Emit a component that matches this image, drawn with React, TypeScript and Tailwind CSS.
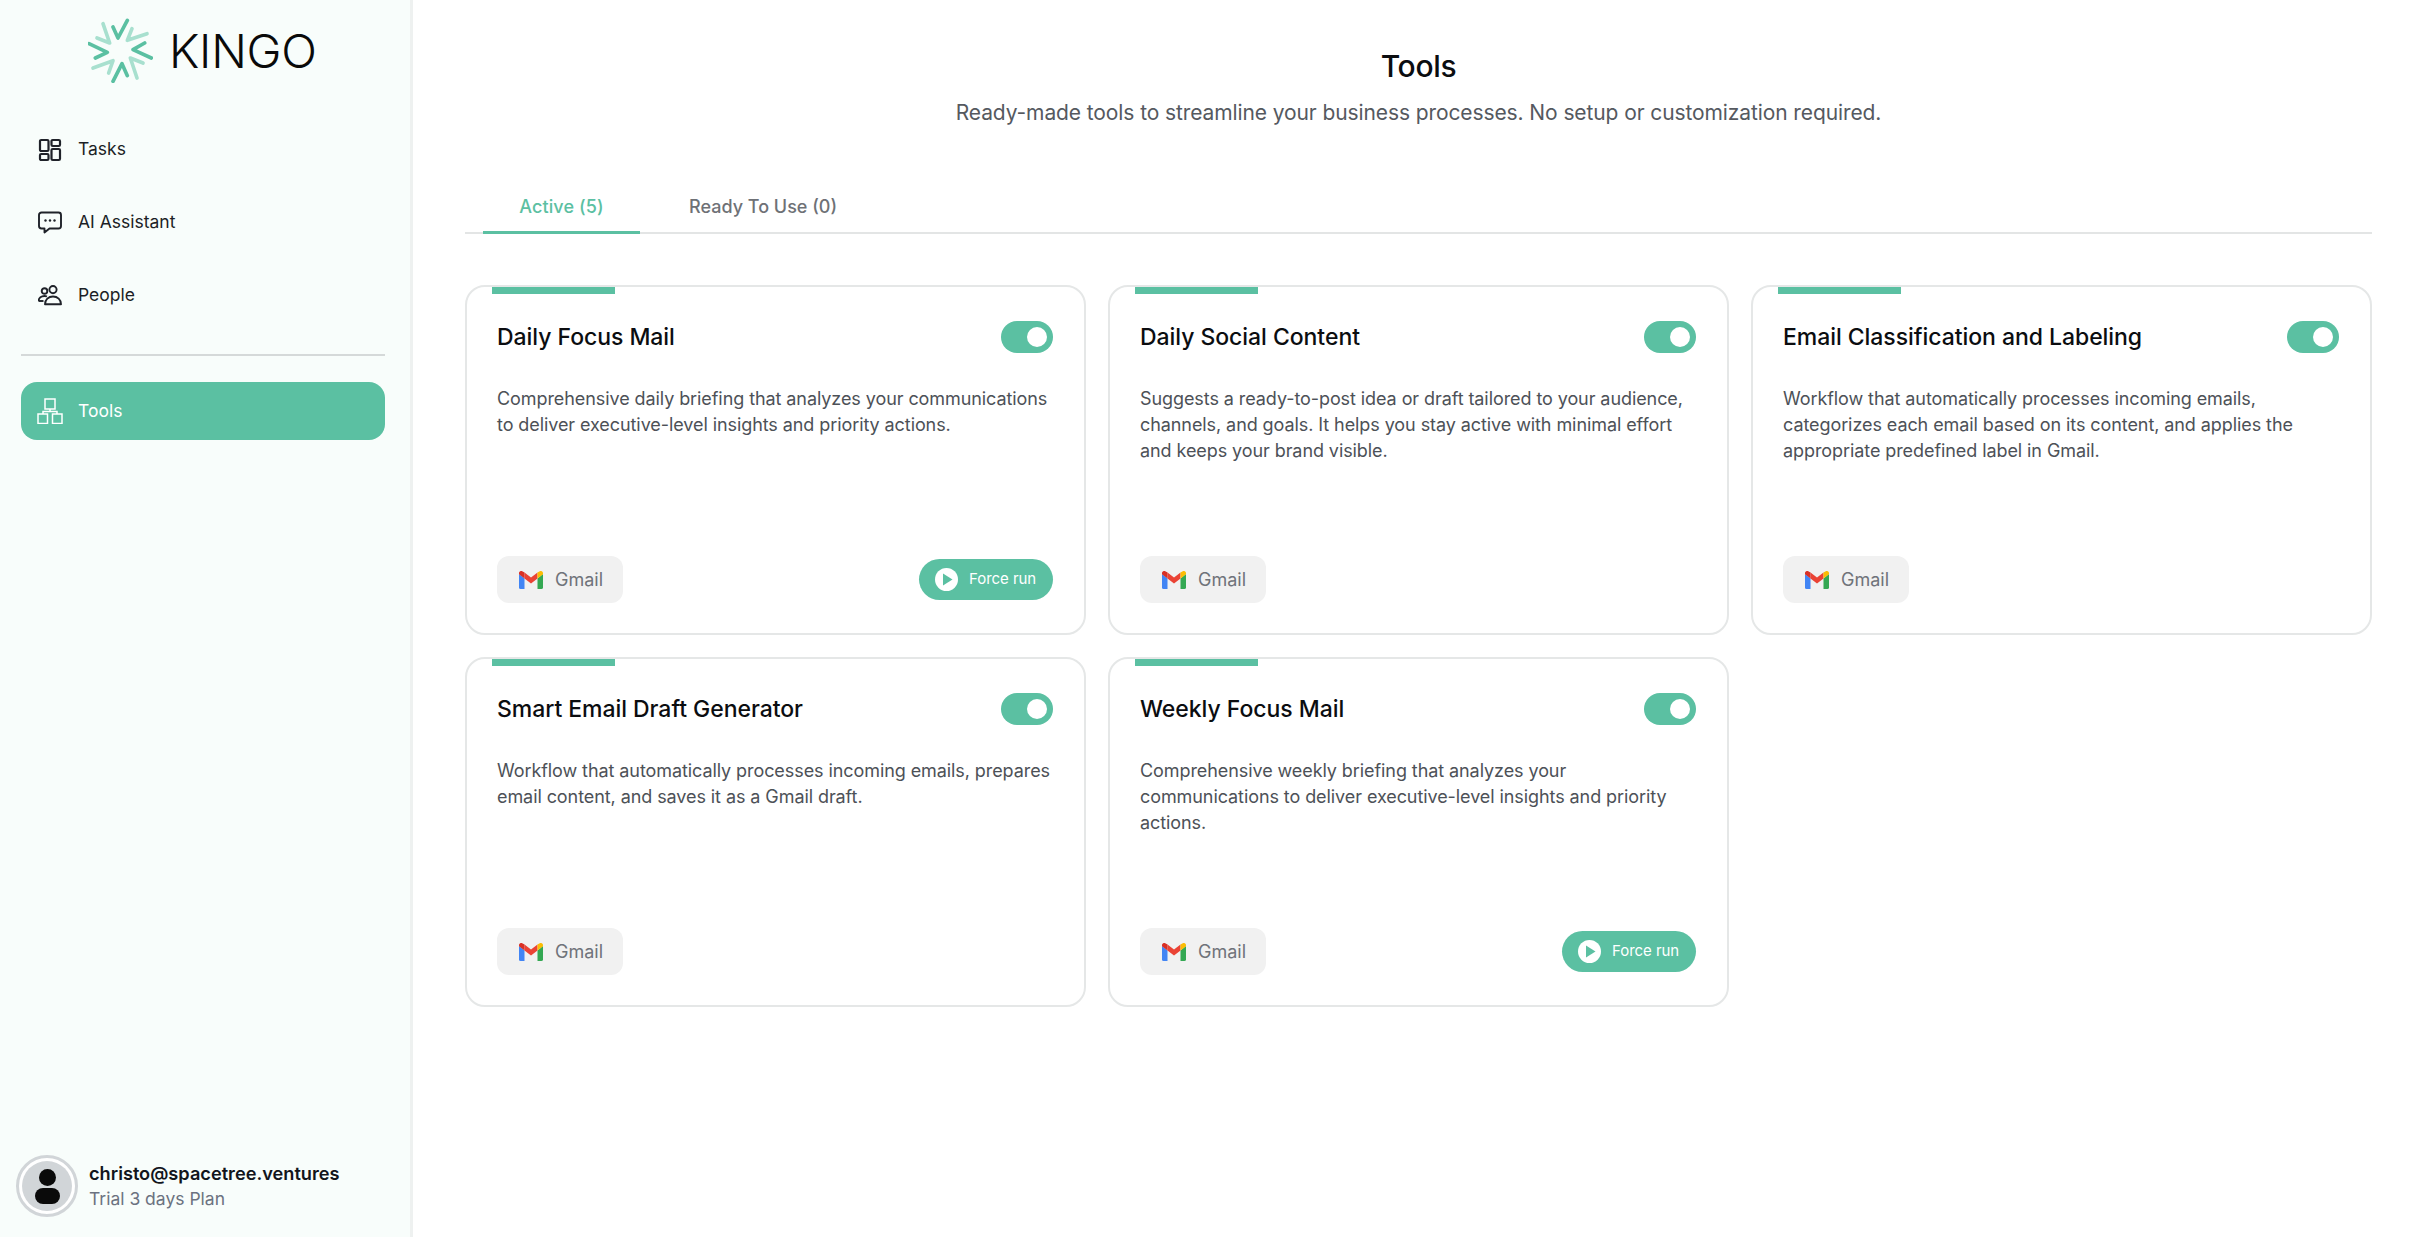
import React from "react";

const font = { fontFamily: "Inter, 'Noto Sans', sans-serif" };

function Logo() {
  return (
    <svg viewBox="85 55 195 195" className="h-[65px] w-[65px] shrink-0" fill="none" strokeWidth="11" strokeLinecap="round" strokeLinejoin="round">
      <g stroke="#5bc0a2">
        <path d="M160 82 L175 115 L203 62" />
        <path d="M88 132 L143 158 L107 175" />
        <path d="M275 175 L220 150 L255 130" />
        <path d="M160 245 L187 192 L203 228" />
      </g>
      <g stroke="#a8e0cf">
        <path d="M130 72 L150 130 L112 115" />
        <path d="M217 87 L203 122 L262 102" />
        <path d="M100 205 L160 183 L147 220" />
        <path d="M232 235 L212 175 L250 190" />
      </g>
    </svg>
  );
}

function TasksIcon() {
  return (
    <svg viewBox="0 0 24 24" className="h-6 w-6" fill="none" stroke="#1f2229" strokeWidth="2.2">
      <rect x="2" y="2" width="8.5" height="11" rx="1.2" />
      <rect x="13.5" y="2" width="8.5" height="6" rx="1.2" />
      <rect x="2" y="16" width="8.5" height="6" rx="1.2" />
      <rect x="13.5" y="11" width="8.5" height="11" rx="1.2" />
    </svg>
  );
}

function ChatIcon() {
  return (
    <svg viewBox="0 0 24 24" className="h-6 w-6" fill="none" stroke="#1f2229" strokeWidth="1.9" strokeLinejoin="round">
      <path d="M3.5 1.5 H20.5 A2.5 2.5 0 0 1 23 4 V15 A2.5 2.5 0 0 1 20.5 17.5 H11.5 L6.5 21.5 V17.5 H3.5 A2.5 2.5 0 0 1 1 15 V4 A2.5 2.5 0 0 1 3.5 1.5 Z" />
      <circle cx="7.5" cy="9.5" r="1.2" fill="#1f2229" stroke="none" />
      <circle cx="12" cy="9.5" r="1.2" fill="#1f2229" stroke="none" />
      <circle cx="16.5" cy="9.5" r="1.2" fill="#1f2229" stroke="none" />
    </svg>
  );
}

function PeopleIcon() {
  return (
    <svg viewBox="0 0 24 24" className="h-6 w-6" fill="none" stroke="#1f2229" strokeWidth="1.9" strokeLinejoin="round">
      <circle cx="6.5" cy="7" r="2.8" />
      <circle cx="15" cy="5.6" r="3.6" />
      <path d="M0.5 17 C0.8 13.8 3.5 12 6.5 12 C7.4 12 8.3 12.2 9 12.5" />
      <path d="M0.5 17 H5.5" />
      <path d="M7 20.2 C7 15.5 10.5 12.5 15 12.5 C19.5 12.5 23 15.5 23 20.2 Z" />
    </svg>
  );
}

function ToolsIcon() {
  return (
    <svg viewBox="0 0 26 26" className="h-[26px] w-[26px]" fill="none" stroke="#ffffff" strokeWidth="1.5">
      <rect x="8" y="1" width="10" height="10" />
      <rect x="1" y="16" width="9.5" height="9.5" />
      <rect x="15.5" y="16" width="9.5" height="9.5" />
      <path d="M13 11 V13.5 M6 16 V13.5 H20 V16" />
    </svg>
  );
}

function GmailIcon() {
  return (
    <svg viewBox="0 0 24 18" className="h-[18px] w-6 shrink-0">
      <path d="M0 3 V16.4 A1.6 1.6 0 0 0 1.6 18 H5.5 V7.5 Z" fill="#4285f4" />
      <path d="M18.5 18 H22.4 A1.6 1.6 0 0 0 24 16.4 V3 L18.5 7.5 Z" fill="#34a853" />
      <path d="M5.5 7.5 L12 12.5 L18.5 7.5 V1.6 L12 6.5 L5.5 1.6 Z" fill="#ea4335" />
      <path d="M18.5 1.6 V7.5 L24 3.2 V2.2 C24 0.2 21.8 -0.6 20.3 0.4 Z" fill="#fbbc04" />
      <path d="M5.5 7.5 V1.6 L3.7 0.4 C2.2 -0.6 0 0.2 0 2.2 V3.2 Z" fill="#d93025" />
    </svg>
  );
}

function NavItem({ icon, label }: { icon: React.ReactNode; label: string }) {
  return (
    <div className="flex h-[73px] items-center pl-[38px]">
      <span className="flex w-[24px] items-center justify-center">{icon}</span>
      <span className="ml-[16px] text-[17.5px] text-[#1c1f26]">{label}</span>
    </div>
  );
}

type Tool = { title: string; desc: string[]; force?: boolean };

const tools: Tool[] = [
  {
    title: "Daily Focus Mail",
    desc: ["Comprehensive daily briefing that analyzes your communications", "to deliver executive-level insights and priority actions."],
    force: true,
  },
  {
    title: "Daily Social Content",
    desc: [
      "Suggests a ready-to-post idea or draft tailored to your audience,",
      "channels, and goals. It helps you stay active with minimal effort",
      "and keeps your brand visible.",
    ],
  },
  {
    title: "Email Classification and Labeling",
    desc: [
      "Workflow that automatically processes incoming emails,",
      "categorizes each email based on its content, and applies the",
      "appropriate predefined label in Gmail.",
    ],
  },
  {
    title: "Smart Email Draft Generator",
    desc: ["Workflow that automatically processes incoming emails, prepares", "email content, and saves it as a Gmail draft."],
  },
  {
    title: "Weekly Focus Mail",
    desc: [
      "Comprehensive weekly briefing that analyzes your",
      "communications to deliver executive-level insights and priority",
      "actions.",
    ],
    force: true,
  },
];

function Card({ tool }: { tool: Tool }) {
  return (
    <div className="relative flex h-[350px] flex-col rounded-[20px] border-2 border-[#e5e7e7] bg-white pb-[30px] pl-[30px] pr-[31px] pt-[34px]">
      <div className="absolute left-[25px] top-0 h-[7px] w-[123px] bg-[#5bc0a2]" />
      <div className="flex h-[32px] items-center justify-between">
        <h3 className="text-[23px] font-medium tracking-[-0.05px] text-[#0b0d10]">{tool.title}</h3>
        <div className="flex h-[32px] w-[52px] items-center justify-end rounded-full bg-[#5bc0a2] pr-[6px]">
          <div className="h-[20px] w-[20px] rounded-full bg-white" />
        </div>
      </div>
      <div className="mt-[33px] text-[18px] leading-[26px] tracking-[-0.08px] text-[#4d5157]">
        {tool.desc.map((l) => (
          <div key={l} className="whitespace-nowrap">{l}</div>
        ))}
      </div>
      <div className="mt-auto flex items-center justify-between">
        <div className="flex h-[47px] w-[126px] items-center rounded-[12px] bg-[#f1f1f1] pl-[22px]">
          <GmailIcon />
          <span className="ml-[12px] text-[18px] text-[#6f737a]">Gmail</span>
        </div>
        {tool.force && (
          <div className="flex h-[41px] w-[134px] items-center rounded-full bg-[#5bc0a2] pl-[16px]">
            <svg viewBox="0 0 23 23" className="h-[23px] w-[23px]">
              <circle cx="11.5" cy="11.5" r="11.5" fill="#fff" />
              <path d="M8 5.5 L17.5 11.5 L8 17.5 Z" fill="#5bc0a2" />
            </svg>
            <span className="ml-[11px] text-[15px] tracking-[-0.05px] text-white">Force run</span>
          </div>
        )}
      </div>
    </div>
  );
}

export default function App() {
  return (
    <div className="flex h-[1237px] w-full overflow-hidden bg-white" style={font}>
      <aside className="flex w-[413px] shrink-0 flex-col border-r-[3px] border-[#eef1f0] bg-[#f8fdfb]">
        <div className="flex h-[113px] items-start pl-[88px] pt-[18px]">
          <Logo />
          <span className="ml-[16px] mt-[9px] text-[47px] font-light leading-none tracking-[-0.3px] text-[#0a0a0a]">KINGO</span>
        </div>
        <nav>
          <NavItem icon={<TasksIcon />} label="Tasks" />
          <NavItem icon={<ChatIcon />} label="AI Assistant" />
          <NavItem icon={<PeopleIcon />} label="People" />
        </nav>
        <div className="ml-[21px] mr-[25px] mt-[22px] h-[2px] bg-[#d5d9d9]" />
        <div className="ml-[21px] mr-[25px] mt-[26px] flex h-[58px] items-center rounded-[16px] bg-[#5bc0a2] pl-[16px]">
          <ToolsIcon />
          <span className="ml-[15px] text-[17.5px] text-white">Tools</span>
        </div>
        <div className="mt-auto mb-[20px] flex items-center pl-[16px]">
          <div className="flex h-[62px] w-[62px] items-center justify-center rounded-full border-[3px] border-[#d1d5d8] bg-white">
            <div className="flex h-[50px] w-[50px] flex-col items-center justify-center rounded-full bg-[#d1d5d8]">
              <div className="h-[17px] w-[17px] rounded-full bg-[#0a0a0a]" />
              <div className="mt-[2px] h-[16px] w-[25px] rounded-full bg-[#0a0a0a]" />
            </div>
          </div>
          <div className="ml-[11px]">
            <div className="text-[18.2px] font-semibold leading-[26px] text-[#12151c]">christo@spacetree.ventures</div>
            <div className="text-[17.5px] leading-[26px] text-[#6b7280]">Trial 3 days Plan</div>
          </div>
        </div>
      </aside>
      <main className="min-w-0 flex-1 pl-[52px] pr-[39px]">
        <div className="pt-[46px] text-center">
          <h1 className="text-[30px] font-medium leading-[40px] tracking-[-0.3px] text-[#0b0d10]">Tools</h1>
          <p className="mt-[11px] text-[21px] leading-[32px] tracking-[-0.1px] text-[#55595f]">
            Ready-made tools to streamline your business processes. No setup or customization required.
          </p>
        </div>
        <div className="mt-[66px] flex h-[39px] items-start border-b-2 border-[#e3e5e5] pl-[18px]">
          <div className="flex h-[39px] w-[157px] items-start justify-center border-b-[3px] border-[#5bc0a2]">
            <span className="text-[18px] font-medium leading-[24px] tracking-[0.1px] text-[#5bc0a2]">Active (5)</span>
          </div>
          <span className="ml-[49px] text-[18px] font-medium leading-[24px] text-[#6e7176]">Ready To Use (0)</span>
        </div>
        <div className="mt-[51px] grid grid-cols-3 gap-x-[22px] gap-y-[22px]">
          {tools.map((t) => (
            <Card key={t.title} tool={t} />
          ))}
        </div>
      </main>
    </div>
  );
}
